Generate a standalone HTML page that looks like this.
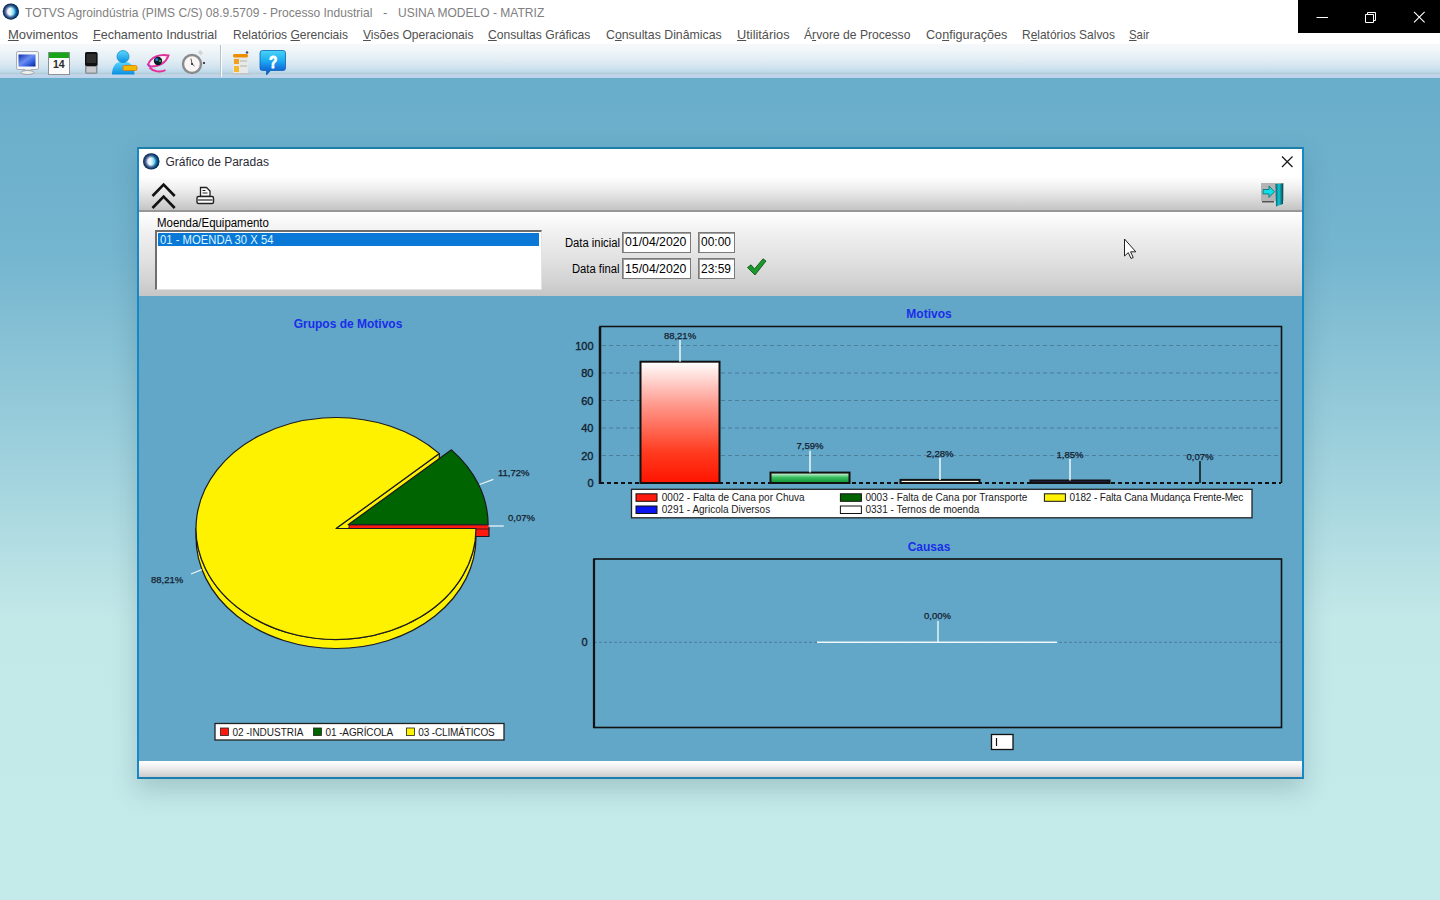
<!DOCTYPE html>
<html><head><meta charset="utf-8">
<style>
*{margin:0;padding:0;box-sizing:border-box}
html,body{width:1440px;height:900px;overflow:hidden;font-family:"Liberation Sans",sans-serif}
body{position:relative;background:linear-gradient(to bottom,#68adca 0px,#68adca 78px,#74b5cf 250px,#9dd0dc 450px,#c3e8e8 620px,#c5eaea 900px)}
.a{position:absolute}
svg.a{overflow:visible}
#titlebar{left:0;top:0;width:1440px;height:24px;background:#fff}
#menubar{left:0;top:24px;width:1440px;height:20px;background:#fff}
#toolbar{left:0;top:44px;width:1440px;height:34px;background:linear-gradient(to bottom,#f6f9fb 0px,#f0f6f9 6px,#e2edf4 16px,#cfe2ef 24px,#bcd9ea 28px,#b4cdd6 29.5px,#c2d5ec 31px,#bad2ea 34px)}
.tt{font-size:13px;line-height:15px;color:#808080;white-space:pre;top:5px;transform-origin:0 0}
.mi{font-size:13px;line-height:15px;color:#505050;top:27px;white-space:pre;transform-origin:0 0}
.mi u{text-decoration:underline;text-underline-offset:1px}
#winctl{left:1298px;top:0;width:142px;height:33px;background:#000}
#dlgshadow{left:137px;top:147px;width:1167px;height:632px;box-shadow:0 10px 24px rgba(30,70,80,0.22)}
#dlg{left:137px;top:147px;width:1167px;height:632px;border:2px solid #1588c8;border-top-color:#1d7eaa;border-bottom-color:#1a7eb0;background:#62a6c8}
#dtitle{left:139px;top:149px;width:1163px;height:27px;background:#fff}
#dtool{left:139px;top:176px;width:1163px;height:36px;background:linear-gradient(to bottom,#ffffff 0%,#f0f0f0 35%,#d8d8d8 72%,#c4c4c4 100%);border-bottom:2px solid #979797}
#dfilter{left:139px;top:212px;width:1163px;height:84px;background:linear-gradient(to bottom,#ffffff 0%,#f0f0f0 25%,#e2e2e2 55%,#d4d4d4 80%,#c6c6c6 100%)}
#dbottom{left:139px;top:761px;width:1163px;height:16px;background:linear-gradient(to bottom,#ffffff 0%,#f4f4f4 30%,#dedede 70%,#cbcbcb 100%)}
.lbl{font-size:12px;line-height:14px;color:#000;white-space:pre;transform-origin:0 0}
.inp{background:#fff;border:1px solid #7a7a7a;box-shadow:inset 1px 1px 0 #a0a0a0}
</style></head><body>
<div id="titlebar" class="a"></div>
<svg class="a" style="left:0;top:0" width="24" height="24" viewBox="0 0 24 24">
<defs><linearGradient id="lg1" x1="0" y1="0" x2="1" y2="0"><stop offset="0.1" stop-color="#d8d8f0"/><stop offset="0.45" stop-color="#f4fbff"/><stop offset="0.6" stop-color="#a8e8fa"/><stop offset="0.85" stop-color="#18c0f0"/></linearGradient>
<radialGradient id="rim" cx="50%" cy="50%" r="50%"><stop offset="0.4" stop-color="#0a2a60" stop-opacity="0"/><stop offset="0.72" stop-color="#0a3a78" stop-opacity="0.8"/><stop offset="1" stop-color="#071a3e" stop-opacity="1"/></radialGradient></defs>
<circle cx="10.8" cy="11.6" r="8.1" fill="url(#lg1)"/><circle cx="10.8" cy="11.6" r="8.1" fill="url(#rim)"/>
</svg>
<div class="a tt" style="left:25px;transform:scaleX(0.925)">TOTVS Agroindústria (PIMS C/S) 08.9.5709 - Processo Industrial</div>
<div class="a tt" style="left:383px">-</div>
<div class="a tt" style="left:397.5px;transform:scaleX(0.926)">USINA MODELO - MATRIZ</div>
<div id="menubar" class="a"></div>
<div class="a mi" style="left:7.9px;transform:scaleX(1.000)"><u>M</u>ovimentos</div>
<div class="a mi" style="left:93.3px;transform:scaleX(0.964)"><u>F</u>echamento Industrial</div>
<div class="a mi" style="left:232.5px;transform:scaleX(0.925)">Relatórios <u>G</u>erenciais</div>
<div class="a mi" style="left:362.5px;transform:scaleX(0.929)"><u>V</u>isões Operacionais</div>
<div class="a mi" style="left:488.3px;transform:scaleX(0.932)"><u>C</u>onsultas Gráficas</div>
<div class="a mi" style="left:606.0px;transform:scaleX(0.948)">C<u>o</u>nsultas Dinâmicas</div>
<div class="a mi" style="left:736.7px;transform:scaleX(0.984)"><u>U</u>tilitários</div>
<div class="a mi" style="left:804.3px;transform:scaleX(0.932)">Á<u>r</u>vore de Processo</div>
<div class="a mi" style="left:926.0px;transform:scaleX(0.971)">Co<u>n</u>figurações</div>
<div class="a mi" style="left:1022.0px;transform:scaleX(0.919)">R<u>e</u>latórios Salvos</div>
<div class="a mi" style="left:1129.4px;transform:scaleX(0.874)"><u>S</u>air</div>
<div id="toolbar" class="a"></div>
<svg class="a" style="left:0;top:44px" width="300" height="34" viewBox="0 44 300 34">
<defs>
<linearGradient id="scr" x1="0" y1="0" x2="1" y2="1"><stop offset="0" stop-color="#0a2fb0"/><stop offset="0.45" stop-color="#6c8ef0"/><stop offset="0.7" stop-color="#3560e0"/><stop offset="1" stop-color="#04208f"/></linearGradient>
<linearGradient id="usr" x1="0" y1="0" x2="0" y2="1"><stop offset="0" stop-color="#5ad8ff"/><stop offset="1" stop-color="#0a8ee0"/></linearGradient>
<linearGradient id="hlp" x1="0" y1="0" x2="0" y2="1"><stop offset="0" stop-color="#48d4f8"/><stop offset="0.45" stop-color="#1aa8f0"/><stop offset="0.7" stop-color="#1478e0"/><stop offset="1" stop-color="#0a58c0"/></linearGradient>
</defs>
<!-- monitor -->
<rect x="16.5" y="51.5" width="22" height="18" rx="1.5" fill="#f4f6f8" stroke="#a8aeb4"/>
<rect x="18.5" y="54.5" width="17" height="12" fill="url(#scr)"/>
<rect x="25" y="69" width="6" height="2.5" fill="#e0e0e0"/>
<ellipse cx="27.5" cy="72.5" rx="6.5" ry="2" fill="#f0f0f0" stroke="#9aa0a6"/>
<!-- calendar -->
<rect x="48.5" y="52.5" width="21" height="22" fill="#fbfbfb" stroke="#8e9294"/>
<rect x="49" y="52.5" width="20" height="5.5" fill="#19a419"/>
<text x="58.8" y="68" font-family="Liberation Sans" font-weight="bold" font-size="10.5" fill="#2a2a2a" text-anchor="middle">14</text>
<!-- phone -->
<rect x="85" y="52" width="12.5" height="22" rx="1.8" fill="#8c9298"/>
<rect x="85" y="52" width="12.5" height="14" rx="1.8" fill="#111"/>
<rect x="86.5" y="54" width="9.5" height="9" fill="#2e2e2e"/>
<rect x="86.5" y="67" width="9.5" height="5.5" fill="#c6cace"/>
<!-- user -->
<path d="M112 74.5 C112 66 116 61.5 123 61.5 C130 61.5 134.5 66 134.5 74.5 Z" fill="url(#usr)"/>
<circle cx="123" cy="56.6" r="6" fill="url(#usr)" stroke="#1a8cc8" stroke-width="0.8"/>
<rect x="123" y="65.5" width="14" height="5" rx="1.5" fill="#f5b800" stroke="#e07800" stroke-width="0.8"/>
<!-- eye -->
<path d="M148 64.5 C151 57 160 53.5 168.5 55.5 C166 62.5 160 66.5 150.5 66.5 Z" fill="#f8f0f6" stroke="#e0309a" stroke-width="2"/>
<path d="M149.5 67.5 C153 71.5 161 73 165.5 70" fill="none" stroke="#e8309a" stroke-width="2"/>
<path d="M148 64.5 C148.5 66 149 66.5 150.5 66.5" fill="none" stroke="#a040c8" stroke-width="1.6"/>
<circle cx="158" cy="61" r="4.2" fill="#0c1a2a"/>
<circle cx="156.8" cy="59.6" r="1.6" fill="#2b7ad0"/>
<circle cx="160" cy="61" r="1.3" fill="#2a9a3a"/>
<!-- stopwatch -->
<rect x="198.5" y="51" width="4" height="3.5" fill="#d4d4d4" transform="rotate(40 200.5 52.7)"/>
<circle cx="192" cy="64" r="9" fill="#fbf6f6" stroke="#8a8a8a" stroke-width="2.4"/>
<path d="M192 64 L191 58.5 M192 64 L194.5 66" stroke="#333" stroke-width="0.8"/>
<circle cx="192" cy="64" r="1" fill="#222"/>
<circle cx="204" cy="63" r="1.1" fill="#222"/>
<!-- separator -->
<rect x="220" y="45" width="1" height="32" fill="#b6c2cc"/>
<rect x="221" y="45" width="1" height="32" fill="#ffffff"/>
<!-- report -->
<rect x="233" y="58" width="15" height="15" fill="#e8e8e8"/>
<rect x="233" y="54" width="15" height="3.5" rx="1.5" fill="#f08c00"/>
<rect x="234" y="59" width="5" height="5" fill="#f0a020"/>
<rect x="234" y="66" width="5" height="6" fill="#f5b828"/>
<rect x="240" y="60" width="7" height="2" fill="#c8d2c8"/>
<rect x="240" y="65" width="7" height="2" fill="#c8d2c8"/>
<rect x="232" y="73" width="19" height="1.5" fill="#c4c4c4"/>
<circle cx="247" cy="52.5" r="1.3" fill="#4a4a7a"/>
<!-- help -->
<path d="M262.5 50.5 H283 Q285.5 50.5 285.5 53 V68 Q285.5 70.5 283 70.5 H270.5 L266.5 75 L266.5 70.5 H262.5 Q260 70.5 260 68 V53 Q260 50.5 262.5 50.5 Z" fill="url(#hlp)" stroke="#0a62b8" stroke-width="0.8"/>
<text x="0" y="0" font-family="Liberation Sans" font-weight="bold" font-size="17" fill="#fff" stroke="#fff" stroke-width="0.9" text-anchor="middle" transform="translate(273.2 68.3) scale(0.8 1)">?</text>
</svg>
<div id="winctl" class="a"></div>
<svg class="a" style="left:1298px;top:0" width="142" height="33" viewBox="1298 0 142 33">
<path d="M1316.5 17.5H1328" stroke="#fff" stroke-width="1"/>
<path d="M1365.5 14.5h8v8h-8z" stroke="#fff" stroke-width="1" fill="none"/>
<path d="M1367.5 14.5v-2h8v8h-2" stroke="#fff" stroke-width="1" fill="none"/>
<path d="M1414 11.8L1424.6 22.4M1424.6 11.8L1414 22.4" stroke="#fff" stroke-width="1.1"/>
</svg>
<div id="dlgshadow" class="a"></div>
<div id="dlg" class="a"></div>
<div id="dtitle" class="a"></div>
<div id="dtool" class="a"></div>
<div id="dfilter" class="a"></div>
<div id="dbottom" class="a"></div>
<svg class="a" style="left:139px;top:149px" width="1163" height="147" viewBox="139 149 1163 147">
<defs>
<radialGradient id="lg2" cx="48%" cy="45%" r="55%"><stop offset="0" stop-color="#f6fcff"/><stop offset="0.3" stop-color="#a0e0f6"/><stop offset="0.6" stop-color="#2496cc"/><stop offset="0.85" stop-color="#0c4680"/><stop offset="1" stop-color="#082e5a"/></radialGradient>
<linearGradient id="door" x1="0" y1="0" x2="1" y2="0"><stop offset="0" stop-color="#0a5a60"/><stop offset="0.45" stop-color="#10c8d8"/><stop offset="1" stop-color="#064850"/></linearGradient>
</defs>
<circle cx="151.2" cy="161.4" r="8.2" fill="url(#lg1)"/><circle cx="151.2" cy="161.4" r="8.2" fill="url(#rim)"/>
<path d="M1282 156.5 L1292.5 167 M1292.5 156.5 L1282 167" stroke="#1a1a1a" stroke-width="1.3"/>
<path d="M152.5 196 L163.6 184.5 L174.7 196 M152.5 208 L163.6 196.5 L174.7 208" fill="none" stroke="#111" stroke-width="2.6"/>
<!-- printer -->
<path d="M200.5 187.5 h6 l3.5 3.5 v5.5 h-9.5 z" fill="#fff" stroke="#222" stroke-width="1.3"/>
<path d="M202.5 190.5h3M202.5 193h5" stroke="#222" stroke-width="1"/>
<rect x="197" y="196.5" width="16.5" height="7" rx="1.5" fill="#fff" stroke="#222" stroke-width="1.4"/>
<path d="M198 200h14.5" stroke="#222" stroke-width="1.2"/>
<!-- exit icon -->
<rect x="1261" y="183" width="23" height="18" fill="#b4b4b4"/>
<rect x="1262" y="201" width="12" height="1.5" fill="#555"/>
<path d="M1275.5 184 L1283 183.5 L1283 204 L1276 206.5 Z" fill="url(#door)"/>
<path d="M1263 189.5 h6 v-3.5 l5.5 5.7 l-5.5 5.7 v-3.5 h-6 z" fill="#0ee0ea" stroke="#066a70" stroke-width="0.8"/>
<!-- cursor -->
<path d="M1124.5 239 L1124.5 256 L1128.3 252.6 L1131 258.5 L1133.2 257.5 L1130.6 251.8 L1135.8 251.8 Z" fill="#fff" stroke="#222" stroke-width="1"/>
<!-- checkmark -->
<path d="M747.5 267.5 L751 264.8 L754.5 269 L763 258.8 L766 261 L755 275 Z" fill="#1a9a2a" stroke="#0a4a10" stroke-width="0.8"/>
</svg>
<div class="a" style="left:165.5px;top:155px;font-size:12px;line-height:14px;color:#2a2a36;white-space:pre">Gráfico de Paradas</div>
<div class="a lbl" style="left:156.9px;top:216px;transform:scaleX(0.953)">Moenda/Equipamento</div>
<div class="a" style="left:155px;top:230px;width:387px;height:60px;background:#fff;border-top:2px solid #6e6e6e;border-left:2px solid #6e6e6e;border-right:1px solid #e2e2e2;border-bottom:1px solid #e2e2e2"></div>
<div class="a" style="left:157.5px;top:233px;width:381.5px;height:13px;background:#0a78d7"></div>
<div class="a lbl" style="left:160px;top:233px;color:#d8f6ff;transform:scaleX(0.94)">01 - MOENDA 30 X 54</div>
<div class="a lbl" style="left:564.5px;top:235.8px;transform:scaleX(0.937)">Data inicial</div>
<div class="a lbl" style="left:572px;top:261.8px;transform:scaleX(0.937)">Data final</div>
<div class="a inp" style="left:622px;top:232px;width:69px;height:21px"></div>
<div class="a inp" style="left:698px;top:232px;width:37px;height:21px"></div>
<div class="a inp" style="left:622px;top:258px;width:69px;height:21px"></div>
<div class="a inp" style="left:698px;top:258px;width:37px;height:21px"></div>
<div class="a lbl" style="left:624.9px;top:235.3px;font-size:13px;transform:scaleX(0.944)">01/04/2020</div>
<div class="a lbl" style="left:700.8px;top:235.3px;font-size:13px;transform:scaleX(0.92)">00:00</div>
<div class="a lbl" style="left:624.9px;top:261.6px;font-size:13px;transform:scaleX(0.944)">15/04/2020</div>
<div class="a lbl" style="left:700.8px;top:261.6px;font-size:13px;transform:scaleX(0.92)">23:59</div>
<svg class="a" style="left:139px;top:296px" width="1163" height="465" viewBox="139 296 1163 465">
<defs>
<linearGradient id="gr" x1="0" y1="0" x2="0" y2="1"><stop offset="0" stop-color="#ffffff"/><stop offset="0.35" stop-color="#ff9a8e"/><stop offset="0.75" stop-color="#ff3a1e"/><stop offset="1" stop-color="#ff1400"/></linearGradient>
<linearGradient id="gg" x1="0" y1="0" x2="0" y2="1"><stop offset="0" stop-color="#f0fff0"/><stop offset="0.45" stop-color="#3cc060"/><stop offset="1" stop-color="#0a9030"/></linearGradient>
</defs>
<text x="348" y="327.6" font-family="Liberation Sans" font-weight="bold" font-size="12" fill="#1a2ee8" text-anchor="middle">Grupos de Motivos</text>
<text x="929" y="318.2" font-family="Liberation Sans" font-weight="bold" font-size="12" fill="#1a2ee8" text-anchor="middle">Motivos</text>
<text x="929" y="550.5" font-family="Liberation Sans" font-weight="bold" font-size="12" fill="#1a2ee8" text-anchor="middle">Causas</text>
<g stroke="#1a1a22" stroke-width="1.2" stroke-linejoin="round">
<path d="M196.00 528.50 A140 111 0 0 0 476.00 528.50 L476.00 537.50 A140 111 0 0 1 196.00 537.50 Z" fill="#fff200"/>
<rect x="349" y="528.5" width="140" height="8" fill="#ff1a10"/>
<path d="M336 528.5 L439.32 453.60 L439.32 462.60 L336 537.5 Z" fill="#fff200"/>
<path d="M348.11 524.75 L488.11 524.26 A140 111 0 0 0 451.43 449.84 Z" fill="#006400"/>
<path d="M349 525.0 L489 525.0 L489 529.0 L349 529.0 Z" fill="#ff1a10" stroke-width="0.8"/>
<path d="M336 528.5 L439.32 453.60 A140 111 0 1 0 476.00 528.50 Z" fill="#fff200"/>
</g>
<g stroke="#e8f4f8" stroke-width="1.3"><path d="M479.6 484.5 L493.4 479.3"/><path d="M488.4 526 L503.8 526"/><path d="M191 574 L201.8 569.7"/></g>
<g font-family="Liberation Sans" font-size="9.5" fill="#142230" stroke="#142230" stroke-width="0.25"><text x="498" y="476.3">11,72%</text><text x="508" y="521.4">0,07%</text><text x="151" y="582.7">88,21%</text></g>
<rect x="215" y="723.5" width="289" height="16.5" fill="#fff" stroke="#222" stroke-width="1.3"/>
<g stroke="#222" stroke-width="0.8"><rect x="220.5" y="728" width="8" height="7.5" fill="#ff1a10"/><rect x="313.5" y="728" width="8" height="7.5" fill="#006400"/><rect x="406.5" y="728" width="8" height="7.5" fill="#fff200"/></g>
<g font-family="Liberation Sans" font-size="10" fill="#1a1a1a"><text x="232.4" y="735.5">02 -INDUSTRIA</text><text x="325.6" y="735.5" textLength="67.6">01 -AGRÍCOLA</text><text x="418.3" y="735.5" textLength="76.4">03 -CLIMÁTICOS</text></g>
<path d="M602 455.5 H1280" stroke="#3c5c74" stroke-opacity="0.55" stroke-width="1" stroke-dasharray="4 3"/>
<path d="M602 428.0 H1280" stroke="#3c5c74" stroke-opacity="0.55" stroke-width="1" stroke-dasharray="4 3"/>
<path d="M602 400.5 H1280" stroke="#3c5c74" stroke-opacity="0.55" stroke-width="1" stroke-dasharray="4 3"/>
<path d="M602 373.0 H1280" stroke="#3c5c74" stroke-opacity="0.55" stroke-width="1" stroke-dasharray="4 3"/>
<path d="M602 345.5 H1280" stroke="#3c5c74" stroke-opacity="0.55" stroke-width="1" stroke-dasharray="4 3"/>
<text x="593.5" y="487.0" font-family="Liberation Sans" font-size="11" fill="#142230" stroke="#142230" stroke-width="0.35" text-anchor="end">0</text>
<text x="593.5" y="459.5" font-family="Liberation Sans" font-size="11" fill="#142230" stroke="#142230" stroke-width="0.35" text-anchor="end">20</text>
<text x="593.5" y="432.0" font-family="Liberation Sans" font-size="11" fill="#142230" stroke="#142230" stroke-width="0.35" text-anchor="end">40</text>
<text x="593.5" y="404.5" font-family="Liberation Sans" font-size="11" fill="#142230" stroke="#142230" stroke-width="0.35" text-anchor="end">60</text>
<text x="593.5" y="377.0" font-family="Liberation Sans" font-size="11" fill="#142230" stroke="#142230" stroke-width="0.35" text-anchor="end">80</text>
<text x="593.5" y="349.5" font-family="Liberation Sans" font-size="11" fill="#142230" stroke="#142230" stroke-width="0.35" text-anchor="end">100</text>
<rect x="640.5" y="361.7" width="79" height="121.3" fill="url(#gr)" stroke="#111" stroke-width="2"/>
<path d="M680 340.0 V361.7" stroke="#f0f8fa" stroke-width="1.5"/>
<text x="680" y="338.5" font-family="Liberation Sans" font-size="9.5" fill="#142230" stroke="#142230" stroke-width="0.25" text-anchor="middle">88,21%</text>
<rect x="770.5" y="472.6" width="79" height="10.4" fill="url(#gg)" stroke="#111" stroke-width="2"/>
<path d="M810 450.8 V472.6" stroke="#f0f8fa" stroke-width="1.5"/>
<text x="810" y="449.3" font-family="Liberation Sans" font-size="9.5" fill="#142230" stroke="#142230" stroke-width="0.25" text-anchor="middle">7,59%</text>
<rect x="900.5" y="479.9" width="79" height="3.1" fill="#fffbe8" stroke="#111" stroke-width="2"/>
<path d="M940 458.0 V479.9" stroke="#f0f8fa" stroke-width="1.5"/>
<text x="940" y="456.5" font-family="Liberation Sans" font-size="9.5" fill="#142230" stroke="#142230" stroke-width="0.25" text-anchor="middle">2,28%</text>
<rect x="1030.5" y="480.5" width="79" height="2.5" fill="#2a2a7a" stroke="#111" stroke-width="2"/>
<path d="M1070 459.0 V480.5" stroke="#f0f8fa" stroke-width="1.5"/>
<text x="1070" y="457.5" font-family="Liberation Sans" font-size="9.5" fill="#142230" stroke="#142230" stroke-width="0.25" text-anchor="middle">1,85%</text>
<path d="M1200 461.0 V482.9" stroke="#111" stroke-width="1.5"/>
<text x="1200" y="459.5" font-family="Liberation Sans" font-size="9.5" fill="#142230" stroke="#142230" stroke-width="0.25" text-anchor="middle">0,07%</text>
<path d="M600 483 V326.5 H1281.5 V483" fill="none" stroke="#111" stroke-width="1.6"/>
<path d="M600 327 V484" stroke="#111" stroke-width="2.5"/>
<path d="M600 483 H1281" stroke="#111" stroke-width="2" stroke-dasharray="4 3"/>
<rect x="631.5" y="489.3" width="620.5" height="28.5" fill="#fff" stroke="#222" stroke-width="1.3"/>
<g stroke="#111" stroke-width="1">
<rect x="636" y="493.8" width="21" height="7.5" fill="#ff1a10"/>
<rect x="840.4" y="493.8" width="21" height="7.5" fill="#006400"/>
<rect x="1044.4" y="493.8" width="21" height="7.5" fill="#fff200"/>
<rect x="636" y="506" width="21" height="7.5" fill="#0a14f0"/>
<rect x="840.4" y="506" width="21" height="7.5" fill="#ffffff"/>
</g>
<g font-family="Liberation Sans" font-size="10" fill="#1a1a1a"><text x="661.8" y="500.8">0002 - Falta de Cana por Chuva</text><text x="865.5" y="500.8">0003 - Falta de Cana por Transporte</text><text x="1069.5" y="500.8" textLength="173.8">0182 - Falta Cana Mudança Frente-Mec</text><text x="661.8" y="513">0291 - Agricola Diversos</text><text x="865.5" y="513">0331 - Ternos de moenda</text></g>
<path d="M594 642.3 H1281" stroke="#3c5c74" stroke-opacity="0.55" stroke-width="1" stroke-dasharray="3 2"/>
<text x="587.5" y="646.3" font-family="Liberation Sans" font-size="11" fill="#142230" stroke="#142230" stroke-width="0.35" text-anchor="end">0</text>
<rect x="594" y="559" width="687.5" height="168.5" fill="none" stroke="#111" stroke-width="1.6"/>
<path d="M594 559 V728" stroke="#111" stroke-width="2.2"/>
<path d="M817 642.3 H1057" stroke="#f0f8fa" stroke-width="1.4"/>
<path d="M938 621 V642" stroke="#f0f8fa" stroke-width="1.4"/>
<text x="937.5" y="618.5" font-family="Liberation Sans" font-size="9.5" fill="#142230" stroke="#142230" stroke-width="0.25" text-anchor="middle">0,00%</text>
<rect x="991.5" y="734.5" width="21.5" height="15" fill="#fff" stroke="#111" stroke-width="1.3"/>
<path d="M996.5 738 V746" stroke="#111" stroke-width="1.2"/>
</svg>
</body></html>
